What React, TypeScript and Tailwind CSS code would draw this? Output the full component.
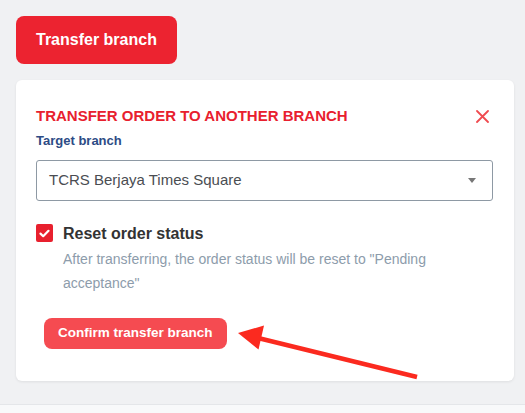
export default function App() {
  return (
    <div
      className="relative w-[525px] h-[413px] overflow-hidden bg-[#f0f1f3]"
      style={{ fontFamily: '"Liberation Sans", Arial, sans-serif' }}
    >
      <div className="h-[404px] px-4 pt-4">
        {/* Trigger */}
        <button className="h-12 px-5 rounded-lg bg-[#ec2330] text-white text-[16px] font-bold leading-5">
          Transfer branch
        </button>

        {/* Card */}
        <div className="mt-4 w-[498px] rounded-md bg-white shadow-[0_1px_3px_rgba(0,0,0,0.08)] px-5 pt-[26px] pb-8">
          <div className="flex items-center justify-between">
            <h2 className="text-[15px] leading-5 font-bold text-[#e8202e]">
              TRANSFER ORDER TO ANOTHER BRANCH
            </h2>
            <svg width="13" height="13" viewBox="0 0 13 13" className="mr-[5px]">
              <path d="M1 1L12 12M12 1L1 12" stroke="#f04b50" strokeWidth="1.8" strokeLinecap="round" />
            </svg>
          </div>

          <label className="block mt-[6px] text-[13px] leading-[18px] font-bold text-[#2d4b85]">
            Target branch
          </label>

          <div className="mt-[10px] h-[41px] w-[457px] flex items-center justify-between rounded-[3px] border border-[#8e99a4] pl-3 pr-4">
            <span className="text-[15px] text-[#4a4d52]">TCRS Berjaya Times Square</span>
            <svg width="8" height="5" viewBox="0 0 8 5">
              <path d="M0 0H8L4 5Z" fill="#777" />
            </svg>
          </div>

          <div className="mt-[23px] flex items-start gap-[10px]">
            <div className="w-[17px] h-[18px] rounded-[2px] bg-[#e8202e] flex items-center justify-center">
              <svg width="11" height="9" viewBox="0 0 11 9">
                <path d="M1.5 4.6L4.2 7.2L9.5 1.8" fill="none" stroke="#fff" strokeWidth="2.2" strokeLinecap="round" strokeLinejoin="round" />
              </svg>
            </div>
            <div className="flex-1">
              <div className="text-[16px] leading-5 font-bold text-[#333]">Reset order status</div>
              <p className="mt-[3px] text-[14px] leading-6 text-[#8d9cab]">
                After transferring, the order status will be reset to "Pending acceptance"
              </p>
            </div>
          </div>

          <button className="mt-[23px] ml-2 h-[31px] px-[14px] rounded-lg bg-[#f54b51] text-white text-[13.5px] font-bold">
            Confirm transfer branch
          </button>
        </div>
      </div>

      <div className="h-[9px] border-t border-[#e4e6e9] bg-[#f8f9fa]" />

      {/* Annotation arrow */}
      <svg className="absolute left-0 top-0" width="525" height="413" viewBox="0 0 525 413">
        <line x1="256" y1="337.5" x2="417" y2="377" stroke="#fb2a1f" strokeWidth="4.5" />
        <polygon points="238,333 264,325.5 258.5,349.5" fill="#fb2a1f" />
      </svg>
    </div>
  );
}
